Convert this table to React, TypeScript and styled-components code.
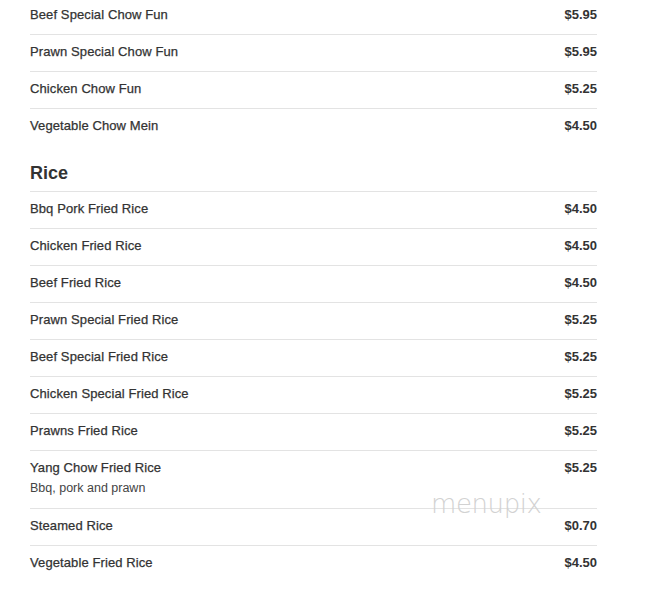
import React from "react";
import styled, { createGlobalStyle } from "styled-components";

const GlobalStyle = createGlobalStyle`
  html, body { margin: 0; padding: 0; background: #fff; }
  body { font-family: "Liberation Sans", Arial, sans-serif; color: #333; }
`;

const Page = styled.div`
  position: relative;
  width: 567px;
  padding: 0 68px 0 30px;
  margin-top: -3px;
`;

const Section = styled.section`
  display: flex;
  flex-direction: column;
`;

const Heading = styled.h2`
  margin: 18px 0 8px;
  font-size: 18px;
  line-height: 20px;
  font-weight: bold;
  color: #333;
`;

const Row = styled.div`
  display: flex;
  justify-content: space-between;
  align-items: flex-start;
  border-top: 1px solid #e3e3e3;
  padding: 7px 0 9px;
`;

const Info = styled.div`
  display: flex;
  flex-direction: column;
`;

const Name = styled.div`
  font-size: 13px;
  line-height: 20px;
  color: #333;
  letter-spacing: 0.1px;
  -webkit-text-stroke: 0.25px #333;
`;

const Desc = styled.div`
  font-size: 12.5px;
  line-height: 21px;
  color: #444;
`;

const Price = styled.div`
  font-size: 13px;
  line-height: 20px;
  font-weight: bold;
  color: #333;
`;

const Watermark = styled.div`
  position: absolute;
  left: 431px;
  top: 492px;
  font-family: "DejaVu Sans", sans-serif;
  font-weight: 200;
  font-size: 26px;
  line-height: 30px;
  color: #d2d2d2;
  letter-spacing: -0.4px;
  pointer-events: none;
`;

type Item = { name: string; price: string; desc?: string };

const chowFun: Item[] = [
  { name: "Beef Special Chow Fun", price: "$5.95" },
  { name: "Prawn Special Chow Fun", price: "$5.95" },
  { name: "Chicken Chow Fun", price: "$5.25" },
  { name: "Vegetable Chow Mein", price: "$4.50" },
];

const rice: Item[] = [
  { name: "Bbq Pork Fried Rice", price: "$4.50" },
  { name: "Chicken Fried Rice", price: "$4.50" },
  { name: "Beef Fried Rice", price: "$4.50" },
  { name: "Prawn Special Fried Rice", price: "$5.25" },
  { name: "Beef Special Fried Rice", price: "$5.25" },
  { name: "Chicken Special Fried Rice", price: "$5.25" },
  { name: "Prawns Fried Rice", price: "$5.25" },
  { name: "Yang Chow Fried Rice", price: "$5.25", desc: "Bbq, pork and prawn" },
  { name: "Steamed Rice", price: "$0.70" },
  { name: "Vegetable Fried Rice", price: "$4.50" },
];

const Items = ({ items }: { items: Item[] }) => (
  <>
    {items.map((it) => (
      <Row key={it.name}>
        <Info>
          <Name>{it.name}</Name>
          {it.desc && <Desc>{it.desc}</Desc>}
        </Info>
        <Price>{it.price}</Price>
      </Row>
    ))}
  </>
);

export default function App() {
  return (
    <>
      <GlobalStyle />
      <Page>
        <Section>
          <Items items={chowFun} />
        </Section>
        <Section>
          <Heading>Rice</Heading>
          <Items items={rice} />
        </Section>
        <Watermark>menupix</Watermark>
      </Page>
    </>
  );
}
